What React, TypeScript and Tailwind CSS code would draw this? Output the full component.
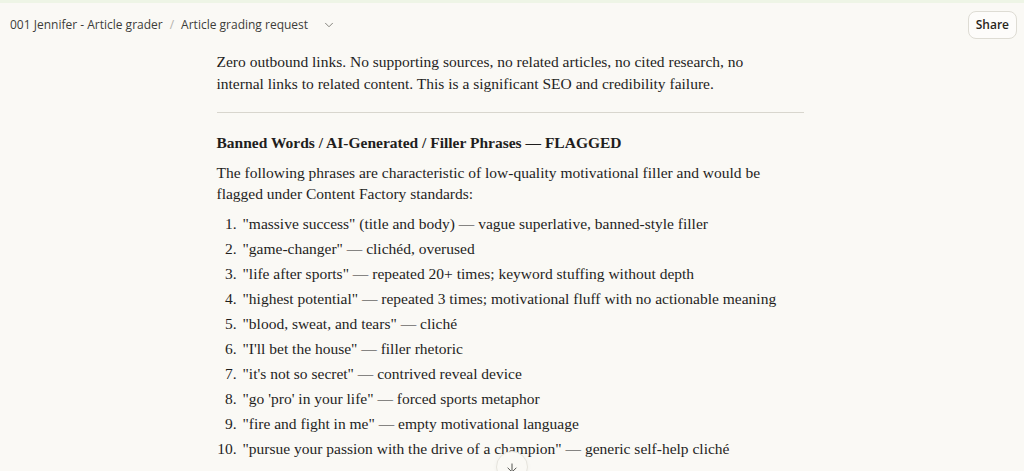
import { ChevronDown, ArrowDown } from 'lucide-react';

const flagged = [
  '"massive success" (title and body) — vague superlative, banned-style filler',
  '"game-changer" — clichéd, overused',
  '"life after sports" — repeated 20+ times; keyword stuffing without depth',
  '"highest potential" — repeated 3 times; motivational fluff with no actionable meaning',
  '"blood, sweat, and tears" — cliché',
  '"I\'ll bet the house" — filler rhetoric',
  '"it\'s not so secret" — contrived reveal device',
  '"go \'pro\' in your life" — forced sports metaphor',
  '"fire and fight in me" — empty motivational language',
  '"pursue your passion with the drive of a champion" — generic self-help cliché',
];

export default function App() {
  return (
    <div className="relative h-[471px] overflow-hidden bg-[#faf9f5] font-['Liberation_Serif',serif] text-[#1f1e1d]">
      <div className="h-[3px] bg-[#eef5e6]" />

      {/* Header */}
      <header className="flex h-[43px] items-center justify-between pl-[10px] pr-[7px] font-['Open_Sans',sans-serif] text-[12px] text-[#3d3d3a]">
        <div className="flex items-center">
          <span>001 Jennifer - Article grader</span>
          <span className="mx-[7px] text-[#b5b3ac]">/</span>
          <span>Article grading request</span>
          <ChevronDown className="ml-[14px] h-[14px] w-[14px] text-[#73726c]" strokeWidth={1.5} />
        </div>
        <button className="flex h-[28px] items-center rounded-lg border border-[#dedcd4] bg-[#fdfcfa] px-[7px] text-[12px] font-semibold text-[#29261b]">
          Share
        </button>
      </header>

      {/* Content */}
      <main className="mx-auto w-[587px] translate-x-[-2px] pt-[5px] text-[15.5px] leading-[21.5px]">
        <p className="max-w-[550px]">
          Zero outbound links. No supporting sources, no related articles, no cited research, no
          internal links to related content. This is a significant SEO and credibility failure.
        </p>

        <hr className="mt-[18px] border-[#d8d6ce]" />

        <h3 className="mt-[19px] font-bold">Banned Words / AI-Generated / Filler Phrases — FLAGGED</h3>
        <p className="mt-[8px] max-w-[550px]">
          The following phrases are characteristic of low-quality motivational filler and would be
          flagged under Content Factory standards:
        </p>

        <ol className="mt-[8px] flex flex-col gap-[3.6px]">
          {flagged.map((item, i) => (
            <li key={i} className="flex">
              <span className="w-[26px] shrink-0 pr-[6px] text-right">{i + 1}.</span>
              <span>{item}</span>
            </li>
          ))}
        </ol>
      </main>

      {/* Scroll to bottom */}
      <div className="absolute left-[496px] top-[451px] flex h-[32px] w-[32px] items-start justify-center rounded-full border border-[#e6e4dd] bg-[#faf9f5] pt-[9px] shadow-[0_0_4px_rgba(0,0,0,0.04)]">
        <ArrowDown className="h-[14px] w-[14px] text-[#3d3d3a]" strokeWidth={1.5} />
      </div>
    </div>
  );
}
